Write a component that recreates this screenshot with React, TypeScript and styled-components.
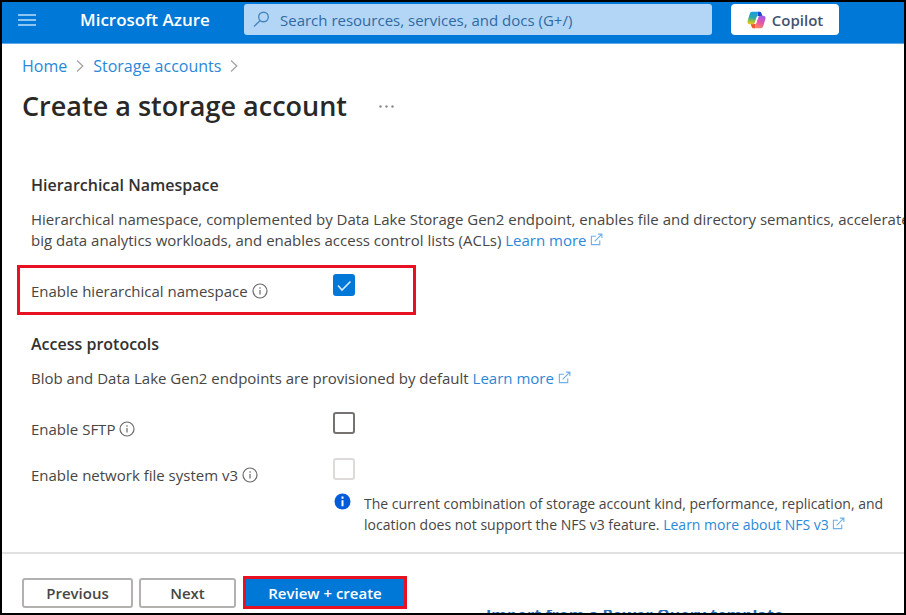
import React from "react";
import styled, { createGlobalStyle } from "styled-components";

const GlobalStyle = createGlobalStyle`
  * { box-sizing: border-box; }
  body { margin: 0; background: #fff; }
  body, button, input { font-family: "Open Sans", "Noto Sans", sans-serif; }
  h1, h2, p { margin: 0; }
`;

const Page = styled.div`
  position: relative;
  min-height: 100vh;
  display: flex;
  flex-direction: column;
  border: 2px solid #000;
  overflow: hidden;
  background: #fff;
  color: #484644;
  font-size: 15px;
  line-height: 21px;
`;

const Header = styled.header`
  display: flex;
  align-items: center;
  height: 42px;
  padding: 0 65px 6px 16px;
  background: #0078d7;
  border-bottom: 1px solid #5ea9e8;
`;

const MenuButton = styled.button`
  display: flex;
  padding: 0;
  border: 0;
  background: none;
`;

const Brand = styled.div`
  width: 164px;
  margin-left: 44px;
  color: #fff;
  font-size: 17px;
  font-weight: 600;
  white-space: nowrap;
`;

const Search = styled.label`
  flex: 1;
  display: flex;
  align-items: center;
  gap: 10px;
  height: 31px;
  padding: 0 9px;
  border-radius: 3px;
  background: #b3d6f6;
`;

const SearchInput = styled.input`
  flex: 1;
  min-width: 0;
  padding: 0;
  border: 0;
  outline: 0;
  background: none;
  color: #2f6aa3;
  font-size: 15px;
  &::placeholder { color: #2f6aa3; opacity: 1; }
`;

const CopilotButton = styled.button`
  display: flex;
  align-items: center;
  justify-content: center;
  gap: 6px;
  width: 108px;
  height: 31px;
  margin-left: 19px;
  padding: 0;
  border: 0;
  border-radius: 4px;
  background: #fff;
  color: #43526f;
  font-size: 15px;
  font-weight: 600;
`;

const Breadcrumb = styled.nav`
  display: flex;
  align-items: center;
  gap: 9px;
  height: 20px;
  margin: 12px 20px 0;
  font-size: 16px;
  line-height: 20px;
`;

const Link = styled.a`
  color: #2b88d8;
  text-decoration: none;
`;

const TitleRow = styled.div`
  display: flex;
  align-items: center;
  gap: 32px;
  margin: 12px 20px 0;
`;

const Title = styled.h1`
  color: #292827;
  font-size: 27px;
  line-height: 36px;
  font-weight: 600;
`;

const MoreButton = styled.button`
  display: flex;
  padding: 0;
  border: 0;
  background: none;
`;

const Content = styled.main`
  flex: 1;
  padding: 51px 0 17px 15px;
`;

const SectionTitle = styled.h2<{ $spaced?: boolean }>`
  margin: ${(p) => (p.$spaced ? 19 : 0)}px 0 14px 14px;
  color: #323130;
  font-size: 16px;
  line-height: 20px;
  font-weight: 600;
`;

const Description = styled.p`
  margin-left: 14px;
  white-space: nowrap;
`;

const Highlight = styled.div`
  width: 399px;
  margin-top: 14px;
  padding: 6px 0 10px;
  border: 3px solid #e81123;
`;

const Field = styled.div<{ $top?: number; $inset?: number }>`
  display: grid;
  grid-template-columns: 302px 22px;
  align-items: start;
  height: 28px;
  margin-top: ${(p) => p.$top ?? 0}px;
  margin-left: ${(p) => p.$inset ?? 14}px;
`;

const FieldLabel = styled.label`
  display: flex;
  align-items: center;
  gap: 4px;
  padding-top: 7px;
  line-height: 20px;
`;

const CheckWrap = styled.span`
  display: grid;
  width: 22px;
  height: 22px;
  & > * { grid-area: 1 / 1; }
  svg { pointer-events: none; }
`;

const Checkbox = styled.input`
  appearance: none;
  width: 22px;
  height: 22px;
  margin: 0;
  border: 2px solid #75726f;
  border-radius: 3px;
  &:checked { border-color: #0078d7; background: #0078d7; }
  &:disabled { border-color: #dedad9; }
`;

const Note = styled.div`
  display: flex;
  gap: 13px;
  margin: 7px 20px 0 317px;
  font-size: 14px;
`;

const NoteText = styled.p`
  white-space: nowrap;
`;

const Footer = styled.footer`
  display: flex;
  align-items: flex-start;
  padding: 22px 20px 4px;
  border-top: 2px solid #e1e1e1;
`;

const Button = styled.button<{ $width: number }>`
  width: ${(p) => p.$width}px;
  height: 30px;
  margin: 2px 6px 0 0;
  padding: 0;
  border: 2px solid #b3b1ae;
  border-radius: 3px;
  background: #fff;
  color: #484644;
  font-size: 15px;
  font-weight: 600;
`;

const PrimaryButton = styled.button`
  width: 164px;
  height: 33px;
  margin-left: 1px;
  padding: 0;
  border: 3px solid #e81123;
  background: #0078d7;
  color: #fff;
  font-size: 15px;
  font-weight: 600;
`;

const Underlay = styled.div`
  position: absolute;
  left: 484px;
  bottom: 0;
  height: 3px;
  overflow: hidden;
  color: #2b6cb8;
  font-size: 16px;
  line-height: 16px;
  font-weight: 700;
  white-space: nowrap;
`;

const UnderlayText = styled.span`
  display: block;
  margin-top: -3px;
`;

const ExternalIcon = () => (
  <svg width="13" height="13" viewBox="0 0 14 14" fill="none" stroke="#6fb1ea" strokeWidth="1.2" aria-hidden="true">
    <path d="M6.5 3.5H1.5v9h9V8M5 9l7.5-7.5M8.5 1.2h4.3v4.3" />
  </svg>
);

const InfoOutline = () => (
  <svg width="16" height="16" viewBox="0 0 16 16" fill="none" stroke="#6b6967" strokeWidth="1.2" aria-hidden="true">
    <circle cx="8" cy="8" r="7" />
    <path d="M8 7v4.5M8 4.3v1.4" />
  </svg>
);

const Chevron = () => (
  <svg width="8" height="14" viewBox="0 0 8 14" fill="none" stroke="#a6a4a2" strokeWidth="1.3" aria-hidden="true">
    <path d="M1 1.5L6.8 7 1 12.5" />
  </svg>
);

const CopilotIcon = () => (
  <svg width="19" height="18" viewBox="0 0 19 18" aria-hidden="true">
    <defs>
      <linearGradient id="cpLeft" x1="0.4" y1="0" x2="0.3" y2="1">
        <stop offset="0" stopColor="#1a9be8" />
        <stop offset="0.45" stopColor="#2aa7b0" />
        <stop offset="0.75" stopColor="#9ac23c" />
        <stop offset="1" stopColor="#f3c51b" />
      </linearGradient>
      <linearGradient id="cpRight" x1="0.7" y1="0" x2="0.3" y2="1">
        <stop offset="0" stopColor="#9b5cf0" />
        <stop offset="0.5" stopColor="#e455a8" />
        <stop offset="1" stopColor="#ff8a5c" />
      </linearGradient>
    </defs>
    <path d="M11 .8h1.6c1 0 1.6.6 1.9 1.5l.9 2.6h-3.2c-1 0-1.7.5-2 1.4z" fill="#1c49c6" />
    <path d="M8 17.2H6.6c-1 0-1.7-.6-2-1.5l-.9-2.6h3.2c1 0 1.7-.5 2-1.4z" fill="#ee5530" />
    <path d="M5.2.8h7.2c-1 .3-1.4 1-1.7 2L8 11.4c-.3 1.1-1 1.8-2.2 1.8H2.7C.9 13.2.1 11.7.6 10L2.7 3C3.1 1.6 3.9.8 5.2.8z" fill="url(#cpLeft)" />
    <path d="M13.8 17.2H6.6c1-.3 1.4-1 1.7-2L11 6.6c.3-1.1 1-1.8 2.2-1.8h3.1c1.8 0 2.6 1.5 2.1 3.2L16.3 15c-.4 1.4-1.2 2.2-2.5 2.2z" fill="url(#cpRight)" />
    <path d="M10.3 5.2h1.5L8.7 12.8H7.4z" fill="#fff" />
  </svg>
);

type OptionProps = {
  id: string;
  label: string;
  top?: number;
  inset?: number;
  checked?: boolean;
  disabled?: boolean;
};

const Option = ({ id, label, top, inset, checked, disabled }: OptionProps) => (
  <Field $top={top} $inset={inset}>
    <FieldLabel htmlFor={id}>
      {label}
      <InfoOutline />
    </FieldLabel>
    <CheckWrap>
      <Checkbox id={id} type="checkbox" defaultChecked={checked} disabled={disabled} />
      {checked && (
        <svg width="22" height="22" viewBox="0 0 22 22" fill="none" stroke="#d6eaff" strokeWidth="1.6" aria-hidden="true">
          <path d="M5 11.5l4 4.5 8.5-8.5" />
        </svg>
      )}
    </CheckWrap>
  </Field>
);

export default function App() {
  return (
    <>
      <GlobalStyle />
      <Page>
        <Header>
          <MenuButton aria-label="Show portal menu">
            <svg width="18" height="14" viewBox="0 0 18 14" stroke="#8cc4f2" strokeWidth="2" aria-hidden="true">
              <path d="M0 2h18M0 7h18M0 12h18" />
            </svg>
          </MenuButton>
          <Brand>Microsoft Azure</Brand>
          <Search>
            <svg width="17" height="17" viewBox="0 0 17 17" fill="none" stroke="#4a86bd" strokeWidth="1.4" aria-hidden="true">
              <circle cx="10.5" cy="6" r="4.8" />
              <path d="M7.2 9.5L1 15.5" />
            </svg>
            <SearchInput aria-label="Search" placeholder="Search resources, services, and docs (G+/)" />
          </Search>
          <CopilotButton>
            <CopilotIcon />
            Copilot
          </CopilotButton>
        </Header>

        <Breadcrumb aria-label="Breadcrumb">
          <Link href="#home">Home</Link>
          <Chevron />
          <Link href="#storage">Storage accounts</Link>
          <Chevron />
        </Breadcrumb>

        <TitleRow>
          <Title>Create a storage account</Title>
          <MoreButton aria-label="More">
            <svg width="15" height="3" viewBox="0 0 15 3" fill="#8a8886" aria-hidden="true">
              <circle cx="1.5" cy="1.5" r="1.2" />
              <circle cx="7.5" cy="1.5" r="1.2" />
              <circle cx="13.5" cy="1.5" r="1.2" />
            </svg>
          </MoreButton>
        </TitleRow>

        <Content>
          <SectionTitle>Hierarchical Namespace</SectionTitle>
          <Description>
            Hierarchical namespace, complemented by Data Lake Storage Gen2 endpoint, enables file and directory semantics, accelerates
            <br />
            big data analytics workloads, and enables access control lists (ACLs){" "}
            <Link href="#namespace">Learn more <ExternalIcon /></Link>
          </Description>

          <Highlight>
            <Option id="hns" label="Enable hierarchical namespace" inset={11} checked />
          </Highlight>

          <SectionTitle $spaced>Access protocols</SectionTitle>
          <Description>
            Blob and Data Lake Gen2 endpoints are provisioned by default{" "}
            <Link href="#protocols">Learn more <ExternalIcon /></Link>
          </Description>

          <Option id="sftp" label="Enable SFTP" top={23} />
          <Option id="nfs" label="Enable network file system v3" top={18} disabled />
          <Note>
            <svg width="17" height="17" viewBox="0 0 17 17" aria-hidden="true">
              <circle cx="8.5" cy="8.5" r="8" fill="#015cda" />
              <path d="M8.5 7.2v6M8.5 3.5v2.2" stroke="#fff" strokeWidth="2" />
            </svg>
            <NoteText>
              The current combination of storage account kind, performance, replication, and
              <br />
              location does not support the NFS v3 feature.{" "}
              <Link href="#nfs-v3">Learn more about NFS v3 <ExternalIcon /></Link>
            </NoteText>
          </Note>
        </Content>

        <Footer>
          <Button $width={111}>Previous</Button>
          <Button $width={97}>Next</Button>
          <PrimaryButton>Review + create</PrimaryButton>
        </Footer>
        <Underlay>
          <UnderlayText>Import from a Power Query template</UnderlayText>
        </Underlay>
      </Page>
    </>
  );
}
